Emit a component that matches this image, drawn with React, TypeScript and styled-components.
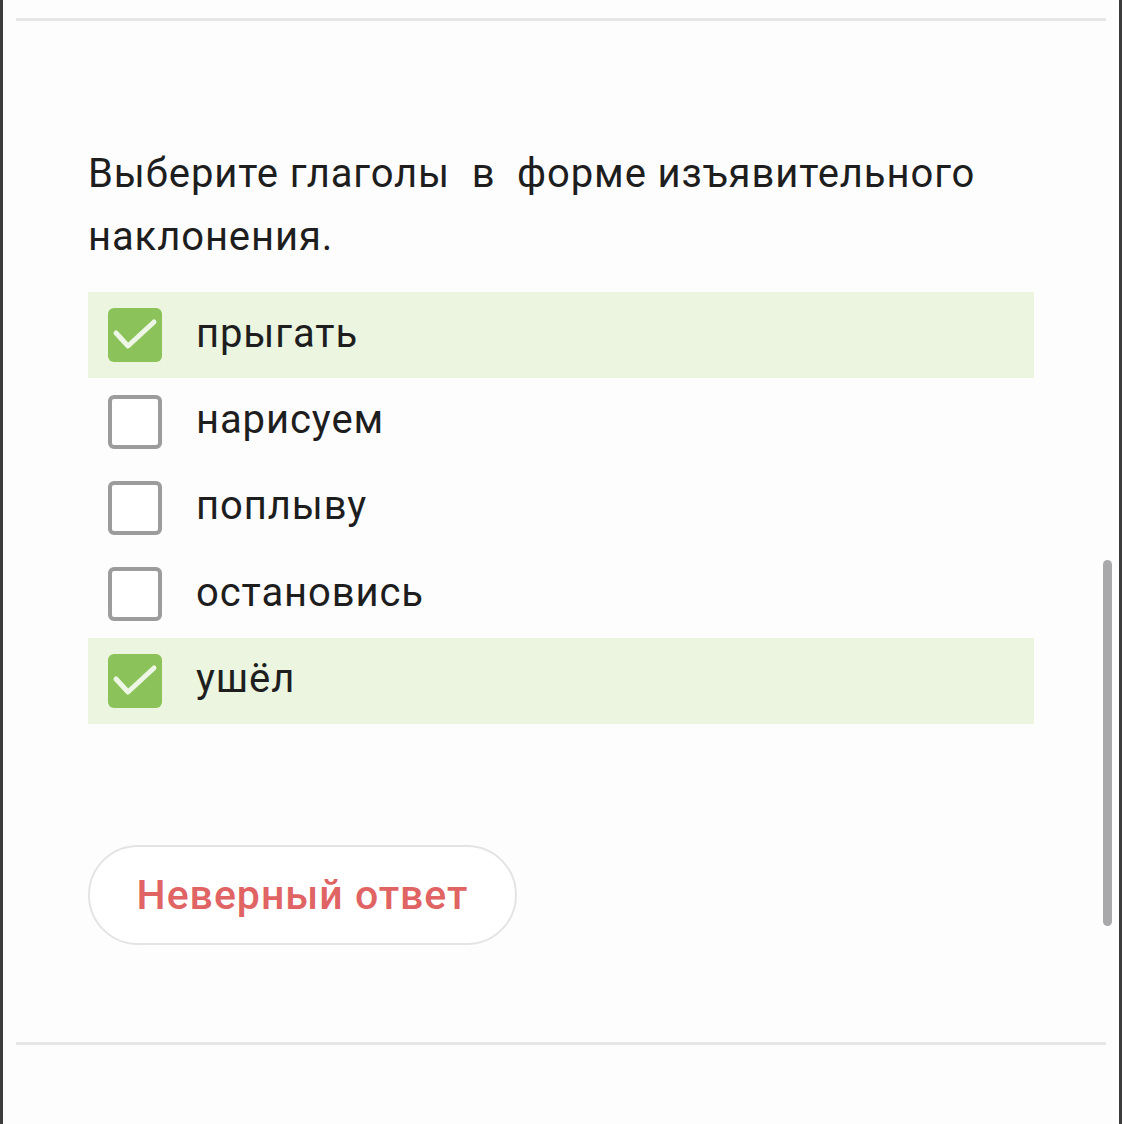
import styled, { createGlobalStyle } from "styled-components"

const GlobalStyle = createGlobalStyle`
  html, body {
    margin: 0;
    padding: 0;
    background: #fdfdfd;
  }
  * {
    box-sizing: border-box;
  }
`

const colors = {
  text: "#1e1e1e",
  divider: "#e7e7e7",
  frame: "#3c3c3c",
  green: "#8bc35a",
  greenBg: "#ebf5e0",
  gray: "#9c9c9c",
  red: "#e06464",
}

const Frame = styled.div`
  position: relative;
  width: 1122px;
  height: 1124px;
  border-left: 3px solid ${colors.frame};
  border-right: 3px solid ${colors.frame};
  background: #fdfdfd;
  padding: 18px 13px 0;
  display: flex;
  flex-direction: column;
  font-family: Roboto, "Noto Sans", sans-serif;
  color: ${colors.text};
  overflow: hidden;
`

const Divider = styled.div`
  height: 3px;
  background: ${colors.divider};
`

const Content = styled.div`
  display: flex;
  flex-direction: column;
  padding: 121px 72px 97px;
`

const Question = styled.p`
  margin: 0;
  font-size: 40px;
  line-height: 63px;
  letter-spacing: 0.9px;
  white-space: pre-wrap;
`

const Options = styled.ul`
  list-style: none;
  margin: 24px 0 0;
  padding: 0;
  display: flex;
  flex-direction: column;
`

const Option = styled.li<{ $checked: boolean }>`
  height: 86.4px;
  display: flex;
  align-items: center;
  gap: 34px;
  padding-left: 20px;
  background: ${(p) => (p.$checked ? colors.greenBg : "transparent")};
  font-size: 40px;
  letter-spacing: 0.9px;
`

const Box = styled.span<{ $checked: boolean }>`
  width: 54px;
  height: 54px;
  flex: none;
  border-radius: 6px;
  display: grid;
  place-items: center;
  background: ${(p) => (p.$checked ? colors.green : "#fff")};
  border: ${(p) => (p.$checked ? "none" : `4px solid ${colors.gray}`)};
`

const Label = styled.span`
  margin-top: -4px;
`

const ResultButton = styled.button`
  margin-top: 121px;
  width: 429px;
  height: 100px;
  border: 2px solid #e4e4e4;
  border-radius: 50px;
  background: #fff;
  color: ${colors.red};
  font-family: Roboto, "Noto Sans", sans-serif;
  font-weight: 500;
  font-size: 41px;
  letter-spacing: 1px;
  padding: 0;
`

const Scrollbar = styled.div`
  position: absolute;
  right: 7px;
  top: 560px;
  width: 9px;
  height: 366px;
  border-radius: 5px;
  background: #a9a9ab;
`

const options = [
  { text: "прыгать", checked: true },
  { text: "нарисуем", checked: false },
  { text: "поплыву", checked: false },
  { text: "остановись", checked: false },
  { text: "ушёл", checked: true },
]

function Check() {
  return (
    <svg width="54" height="54" viewBox="0 0 54 54">
      <polyline
        points="8,25 20,38 46,14"
        fill="none"
        stroke="#eef7e6"
        strokeWidth="5"
        strokeLinecap="round"
        strokeLinejoin="round"
      />
    </svg>
  )
}

export default function App() {
  return (
    <Frame>
      <GlobalStyle />
      <Divider />
      <Content>
        <Question>{"Выберите глаголы  в  форме изъявительного наклонения."}</Question>
        <Options>
          {options.map((o) => (
            <Option key={o.text} $checked={o.checked}>
              <Box $checked={o.checked}>{o.checked && <Check />}</Box>
              <Label>{o.text}</Label>
            </Option>
          ))}
        </Options>
        <ResultButton>Неверный ответ</ResultButton>
      </Content>
      <Divider />
      <Scrollbar />
    </Frame>
  )
}
